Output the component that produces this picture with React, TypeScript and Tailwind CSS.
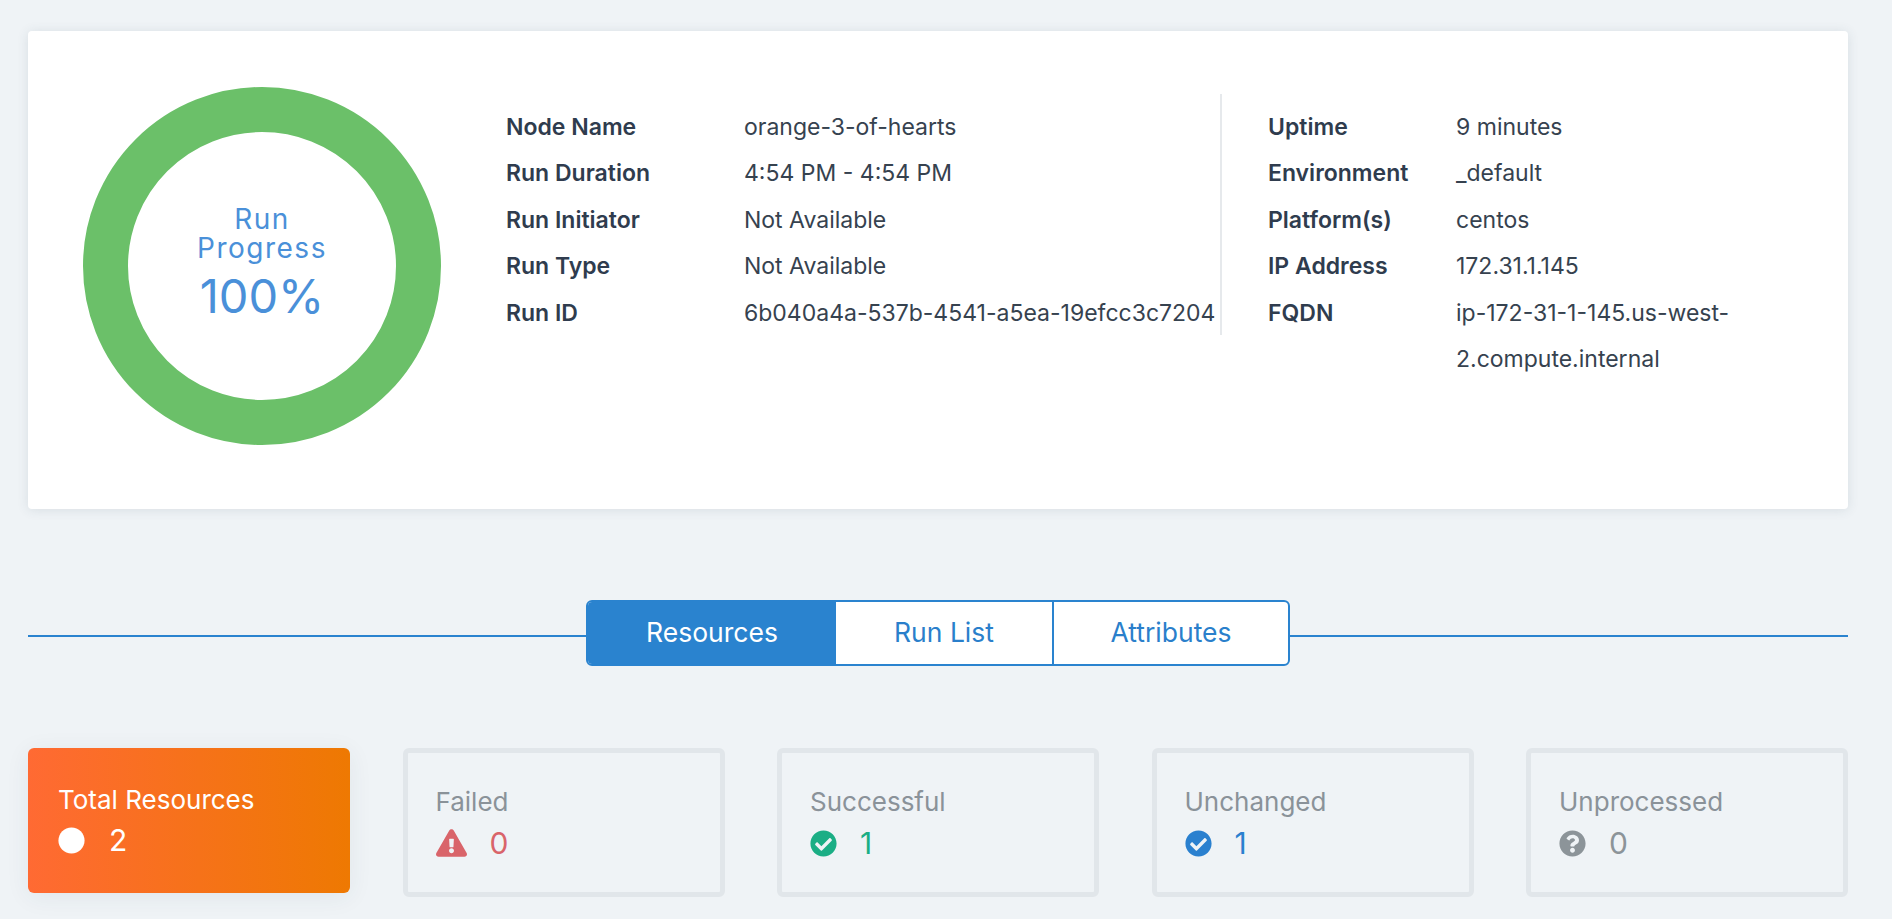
import type { ReactNode } from "react";
import { FaCheckCircle, FaCircle, FaExclamationTriangle, FaQuestionCircle } from "react-icons/fa";

const runRows = [
  ["Node Name", "orange-3-of-hearts"],
  ["Run Duration", "4:54 PM - 4:54 PM"],
  ["Run Initiator", "Not Available"],
  ["Run Type", "Not Available"],
  ["Run ID", "6b040a4a-537b-4541-a5ea-19efcc3c7204"],
];

const nodeRows = [
  ["Uptime", "9 minutes"],
  ["Environment", "_default"],
  ["Platform(s)", "centos"],
  ["IP Address", "172.31.1.145"],
  ["FQDN", "ip-172-31-1-145.us-west-2.compute.internal"],
];

function InfoRows({ rows, labelWidth, valueWidth }: { rows: string[][]; labelWidth: string; valueWidth: string }) {
  return (
    <div className="pt-[10px]">
      {rows.map(([label, value]) => (
        <div key={label} className="flex text-[23px] leading-[46.4px]">
          <div className={`${labelWidth} shrink-0 font-semibold text-[#2f3c4e]`}>{label}</div>
          <div className={`${valueWidth} shrink-0 text-[#36424f]`}>{value}</div>
        </div>
      ))}
    </div>
  );
}

function StatCard({ label, count, icon, color }: { label: string; count: number; icon: ReactNode; color: string }) {
  return (
    <div className="h-[149px] rounded-[6px] border-[5px] border-[#e1e6ea] pl-[28px] pt-[32px]">
      <div className="text-[26px] leading-[34px] text-[#8a9299]">{label}</div>
      <div className={`mt-[4px] flex items-center gap-[23px] text-[30px] leading-[40px] ${color}`}>
        {icon}
        <span>{count}</span>
      </div>
    </div>
  );
}

export default function App() {
  return (
    <div className="min-h-screen bg-[#eff3f6] pb-[23px] pl-[28px] pr-[44px] pt-[31px] font-['Inter','Liberation_Sans',sans-serif]">
      <div className="flex h-[478px] rounded-[4px] bg-white pl-[55px] pt-[56px] shadow-[0_1px_12px_rgba(48,70,90,0.12)]">
        <div className="relative h-[358px] w-[358px] shrink-0">
          <svg viewBox="0 0 358 358" className="h-full w-full">
            <circle cx="179" cy="179" r="156.5" fill="none" stroke="#6bc069" strokeWidth="45" />
          </svg>
          <div className="absolute inset-0 flex flex-col items-center justify-center pb-[6px] text-[#4a90d9]">
            <div className="text-[28px] leading-[29px] tracking-[1.5px]">Run</div>
            <div className="text-[28px] leading-[29px] tracking-[1.5px]">Progress</div>
            <div className="mt-[8px] text-[47px] leading-[50px]">100%</div>
          </div>
        </div>

        <div className="ml-[65px] mt-[7px] h-[241px] w-[716px] shrink-0 border-r-2 border-[#e6e9ec]">
          <InfoRows rows={runRows} labelWidth="w-[238px]" valueWidth="w-[476px]" />
        </div>

        <div className="ml-[46px] mt-[7px]">
          <InfoRows rows={nodeRows} labelWidth="w-[188px]" valueWidth="w-[340px]" />
        </div>
      </div>

      <div className="mt-[91px] flex items-center">
        <div className="mt-[6px] h-[2px] flex-1 bg-[#2a83cf]" />
        <div className="flex h-[66px] overflow-hidden rounded-[6px] border-2 border-[#2a83cf] bg-white text-[26.5px] text-[#2a7fcb]">
          <div className="flex w-[248px] items-center justify-center bg-[#2a83cf] text-white">Resources</div>
          <div className="flex w-[218px] items-center justify-center border-r-2 border-[#2a83cf]">Run List</div>
          <div className="flex w-[234px] items-center justify-center">Attributes</div>
        </div>
        <div className="mt-[6px] h-[2px] flex-1 bg-[#2a83cf]" />
      </div>

      <div className="mt-[82px] grid grid-cols-5 gap-[52.5px]">
        <div className="h-[145px] rounded-[6px] bg-linear-to-r/srgb from-[#ff6a33] to-[#ee7902] pl-[30px] pt-[35px] text-white shadow-[0_4px_24px_rgba(48,70,90,0.07)]">
          <div className="text-[26px] leading-[34px]">Total Resources</div>
          <div className="mt-[3px] flex items-center gap-[24px] text-[30px] leading-[40px]">
            <FaCircle className="h-[27px] w-[27px]" />
            <span>2</span>
          </div>
        </div>
        <StatCard
          label="Failed"
          count={0}
          color="text-[#d9646a]"
          icon={<FaExclamationTriangle className="h-[28px] w-[31px]" />}
        />
        <StatCard
          label="Successful"
          count={1}
          color="text-[#1bae85]"
          icon={<FaCheckCircle className="h-[27px] w-[27px]" />}
        />
        <StatCard
          label="Unchanged"
          count={1}
          color="text-[#2a80cf]"
          icon={<FaCheckCircle className="h-[27px] w-[27px]" />}
        />
        <StatCard
          label="Unprocessed"
          count={0}
          color="text-[#8c9499]"
          icon={<FaQuestionCircle className="h-[27px] w-[27px]" />}
        />
      </div>
    </div>
  );
}
